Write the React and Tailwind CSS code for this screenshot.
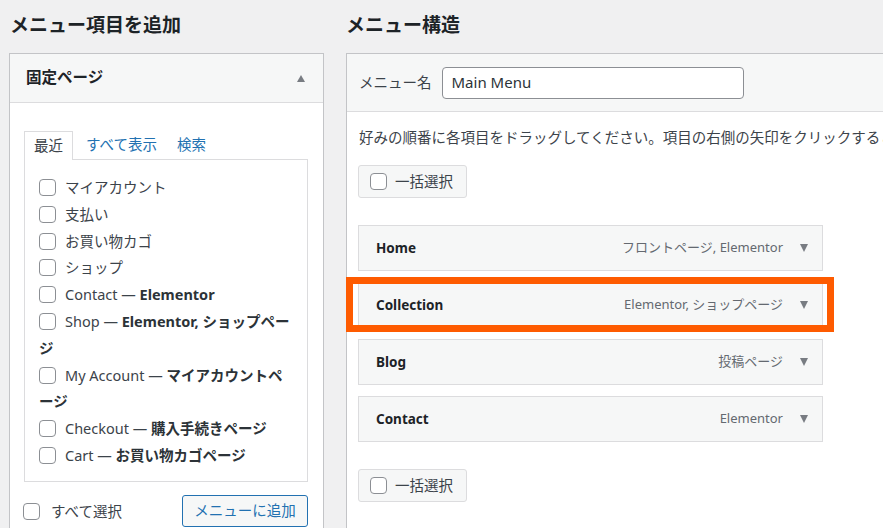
const font = { fontFamily: '"Noto Sans", "Noto Sans CJK JP", sans-serif' };

const Checkbox = ({ className = '' }) => (
  <span
    className={`inline-block w-[17px] h-[17px] border border-[#8c8f94] rounded-[4px] bg-white shrink-0 ${className}`}
  />
);

// lines split the way the narrow box wraps them
const pages = [
  { label: 'マイアカウント' },
  { label: '支払い' },
  { label: 'お買い物カゴ' },
  { label: 'ショップ' },
  { label: 'Contact — ', bold: ['Elementor'] },
  { label: 'Shop — ', bold: ['Elementor, ショップペー', 'ジ'] },
  { label: 'My Account — ', bold: ['マイアカウントペ', 'ージ'] },
  { label: 'Checkout — ', bold: ['購入手続きページ'] },
  { label: 'Cart — ', bold: ['お買い物カゴページ'] },
];

const menuItems = [
  { title: 'Home', meta: 'フロントページ, Elementor' },
  { title: 'Collection', meta: 'Elementor, ショップページ', highlight: true },
  { title: 'Blog', meta: '投稿ページ' },
  { title: 'Contact', meta: 'Elementor' },
];

const BulkSelect = () => (
  <div className="inline-flex items-center h-[33px] w-[109px] pl-[11px] gap-[8px] bg-[#f6f7f7] border border-[#dcdcde] rounded-[3px] text-[14.5px] text-[#3c434a]">
    <Checkbox />
    <span>一括選択</span>
  </div>
);

export default function App() {
  return (
    <div className="w-[883px] h-[528px] overflow-hidden bg-[#f0f0f1] flex text-[#3c434a]" style={font}>
      {/* left column */}
      <div className="w-[315px] ml-[9px] shrink-0">
        <h2 className="h-[50px] mb-[3px] flex items-center pl-[1px] text-[19px] font-bold text-[#1d2327]">
          メニュー項目を追加
        </h2>
        <div className="border border-[#c3c4c7] bg-white h-[600px]">
          <div className="h-[49px] bg-[#f6f7f7] border-b border-[#dcdcde] flex items-center justify-between pl-[16px] pr-[18px]">
            <span className="text-[15.5px] font-bold text-[#1d2327]">固定ページ</span>
            <span className="w-0 h-0 border-l-[4.5px] border-r-[4.5px] border-b-[7px] border-l-transparent border-r-transparent border-b-[#787c82]" />
          </div>
          <div className="pl-[14px] pr-[15px] pt-[27px]">
            <div className="flex items-end h-[29px] text-[14.5px]">
              <div className="h-[29px] w-[49px] border border-b-0 border-[#dcdcde] bg-white flex items-center justify-center relative top-[1px] text-[#3c434a]">
                最近
              </div>
              <span className="ml-[13px] mb-[3px] text-[#2271b1]">すべて表示</span>
              <span className="ml-[20px] mb-[3px] text-[#2271b1]">検索</span>
            </div>
            <div className="border border-[#dcdcde] pl-[14px] pr-[8px] pt-[14px] pb-[12px] text-[14.5px]">
              {pages.map((p, i) => (
                <div key={i} className="leading-[26.8px] whitespace-nowrap">
                  <Checkbox className="mr-[9px] align-top relative top-[5px]" />
                  {p.label}
                  {p.bold &&
                    p.bold.map((line, j) => (
                      <span key={j} className="font-bold text-[#2c3338]">
                        {j > 0 && <br />}
                        {line}
                      </span>
                    ))}
                </div>
              ))}
            </div>
            <div className="flex items-center justify-between mt-[13px]">
              <div className="flex items-center gap-[11px] text-[14.5px] -ml-[1px] mt-[2px]">
                <Checkbox />
                <span>すべて選択</span>
              </div>
              <div className="h-[32px] w-[126px] border border-[#2271b1] rounded-[3px] bg-[#f6f7f7] text-[#2271b1] text-[14.5px] flex items-center justify-center">
                メニューに追加
              </div>
            </div>
          </div>
        </div>
      </div>

      {/* right column */}
      <div className="ml-[22px] flex-1 min-w-0">
        <h2 className="h-[50px] mb-[3px] flex items-center text-[19px] font-bold text-[#1d2327]">
          メニュー構造
        </h2>
        <div className="border-l border-t border-[#c3c4c7] bg-white w-[600px] h-[600px]">
          <div className="h-[58px] bg-[#f6f7f7] border-b border-[#dcdcde] flex items-center pl-[12px]">
            <span className="text-[14.5px]">メニュー名</span>
            <div className="ml-[10px] w-[302px] h-[32px] border border-[#8c8f94] rounded-[4px] bg-white flex items-center pl-[9px] text-[15px] text-[#2c3338]">
              Main Menu
            </div>
          </div>
          <div className="pl-[11px] pt-[14px]">
            <p className="text-[14.5px] whitespace-nowrap pl-[1px] leading-[22px]">
              好みの順番に各項目をドラッグしてください。項目の右側の矢印をクリックすると、設定を変更できます。
            </p>
            <div className="mt-[17px]">
              <BulkSelect />
            </div>
            <div className="mt-[27px] flex flex-col gap-[11px] w-[465px]">
              {menuItems.map((m) => (
                <div
                  key={m.title}
                  className="relative h-[46px] bg-[#f6f7f7] border border-[#dcdcde] flex items-center pl-[17px] pr-[14px]"
                >
                  <span className="font-bold text-[13.5px] text-[#1d2327]">{m.title}</span>
                  <span className="ml-auto text-[13px] text-[#646970]">{m.meta}</span>
                  <span className="ml-[17px] w-0 h-0 border-l-[4.5px] border-r-[4.5px] border-t-[8px] border-l-transparent border-r-transparent border-t-[#787c82]" />
                  {m.highlight && (
                    <span className="absolute -left-[13px] -right-[12px] -top-[6px] -bottom-[5px] border-[7px] border-[#fe5b00] pointer-events-none" />
                  )}
                </div>
              ))}
            </div>
            <div className="mt-[27px]">
              <BulkSelect />
            </div>
          </div>
        </div>
      </div>
    </div>
  );
}
